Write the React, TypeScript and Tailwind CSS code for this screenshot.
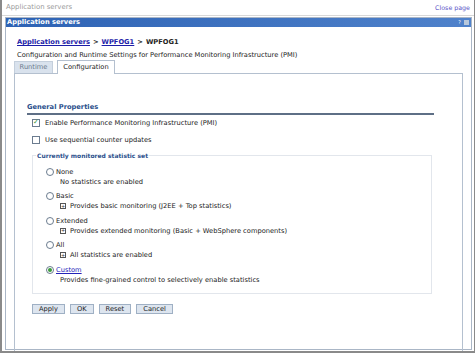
import React from "react";

const font = { fontFamily: '"DejaVu Sans", Verdana, sans-serif' };

function Radio({ checked = false }: { checked?: boolean }) {
  return (
    <span className="inline-flex h-[8px] w-[8px] items-center justify-center rounded-full border border-[#6b7c8f] bg-white">
      {checked && <span className="h-[4px] w-[4px] rounded-full bg-[#3c9a3c]" />}
    </span>
  );
}

function Expand() {
  return (
    <span className="inline-flex h-[6px] w-[6px] items-center justify-center border border-[#555] text-[5px] leading-none text-[#333]">
      +
    </span>
  );
}

function Option({
  label,
  desc,
  expand = false,
  checked = false,
  link = false,
}: {
  label: string;
  desc: string;
  expand?: boolean;
  checked?: boolean;
  link?: boolean;
}) {
  return (
    <div className="flex flex-col">
      <div className="flex h-[9px] items-center gap-[2px]">
        <Radio checked={checked} />
        {link ? (
          <span className="text-[#2323b8] underline">{label}</span>
        ) : (
          <span>{label}</span>
        )}
      </div>
      <div className="mt-[1px] flex h-[9px] items-center gap-[4px] pl-[14px]">
        {expand && <Expand />}
        <span>{desc}</span>
      </div>
    </div>
  );
}

export default function App() {
  return (
    <div
      className="h-[353px] w-[475px] overflow-hidden border-l-2 border-r border-b-2 border-[#8a8a8a] bg-white text-[6.7px] text-[#222]"
      style={font}
    >
      {/* page header */}
      <div className="flex h-[16px] items-center justify-between border-b border-[#d8d8d8] pl-[4px] pr-[4px]">
        <span className="text-[6.9px] text-[#9a9a9a]">Application servers</span>
        <span className="text-[6.3px] text-[#5a55c8]">Close page</span>
      </div>

      {/* portlet */}
      <div className="ml-[3px] mr-[2px] mt-[1px] flex h-[333px] flex-col border border-[#aab6c6]">
        <div className="flex h-[9px] items-center justify-between bg-gradient-to-r from-[#2d62b4] to-[#4f82cb] pl-[1px] pr-[2px]">
          <span className="font-bold text-white">Application servers</span>
          <span className="flex items-center gap-[3px] text-[5px] text-white">
            <span>?</span>
            <span className="h-[5px] w-[5px] bg-[#b8c8dc]" />
          </span>
        </div>

        <div className="flex flex-1 flex-col pl-[11px] pr-[8px] pt-[11px]">
          <div className="flex h-[8px] items-center gap-[3px] font-bold">
            <span className="text-[#1c1ca8] underline">Application servers</span>
            <span>&gt;</span>
            <span className="text-[#1c1ca8] underline">WPFOG1</span>
            <span>&gt;</span>
            <span>WPFOG1</span>
          </div>
          <div className="mt-[4px] h-[8px]">
            Configuration and Runtime Settings for Performance Monitoring Infrastructure (PMI)
          </div>

          {/* tabs */}
          <div className="mt-[1px] flex items-end gap-[4px]">
            <div className="-ml-[3px] flex h-[12px] w-[39px] items-center justify-center border border-b-0 border-[#c4cfdc] bg-[#d9e2ed] text-[#6a7a8c]">
              Runtime
            </div>
            <div className="relative top-[1px] flex h-[14px] w-[58px] items-center justify-center border border-b-0 border-[#b4c0cf] bg-white">
              Configuration
            </div>
          </div>

          <div className="-ml-[3px] flex h-[282px] flex-col border border-[#b4c0cf] pl-[12px] pr-[28px] pt-[28px]">
            <div className="border-b-2 border-[#5e6f86] pb-[1px] font-bold text-[#2a4f8c]">
              General Properties
            </div>

            <div className="mt-[3px] flex h-[9px] items-center gap-[5px] pl-[5px]">
              <span className="flex h-[8px] w-[8px] items-center justify-center border border-[#6b7c8f] bg-white text-[7px] leading-none text-[#3c9a3c]">
                ✓
              </span>
              <span>Enable Performance Monitoring Infrastructure (PMI)</span>
            </div>
            <div className="mt-[8px] flex h-[9px] items-center gap-[5px] pl-[5px]">
              <span className="h-[8px] w-[8px] border border-[#6b7c8f] bg-white" />
              <span>Use sequential counter updates</span>
            </div>

            <fieldset className="mt-[7px] ml-[5px] mr-[2px] border border-[#e2e6ec] pb-[9px] pl-[13px] pt-[7px]">
              <legend className="-ml-[10px] px-[1px] text-[6px] font-bold text-[#2a4f8c]">
                Currently monitored statistic set
              </legend>
              <div className="flex flex-col gap-[5.5px]">
                <Option label="None" desc="No statistics are enabled" />
                <Option label="Basic" desc="Provides basic monitoring (J2EE + Top statistics)" expand />
                <Option
                  label="Extended"
                  desc="Provides extended monitoring (Basic + WebSphere components)"
                  expand
                />
                <Option label="All" desc="All statistics are enabled" expand />
                <Option
                  label="Custom"
                  desc="Provides fine-grained control to selectively enable statistics"
                  checked
                  link
                />
              </div>
            </fieldset>

            <div className="mt-[10px] flex gap-[5px] pl-[5px]">
              {["Apply", "OK", "Reset", "Cancel"].map((b) => (
                <button
                  key={b}
                  className="h-[10px] border border-[#9fb0c4] bg-[#dde5ef] px-[6px] text-[6.7px] leading-none text-[#222]"
                  style={font}
                >
                  {b}
                </button>
              ))}
            </div>
          </div>
        </div>
      </div>
    </div>
  );
}
